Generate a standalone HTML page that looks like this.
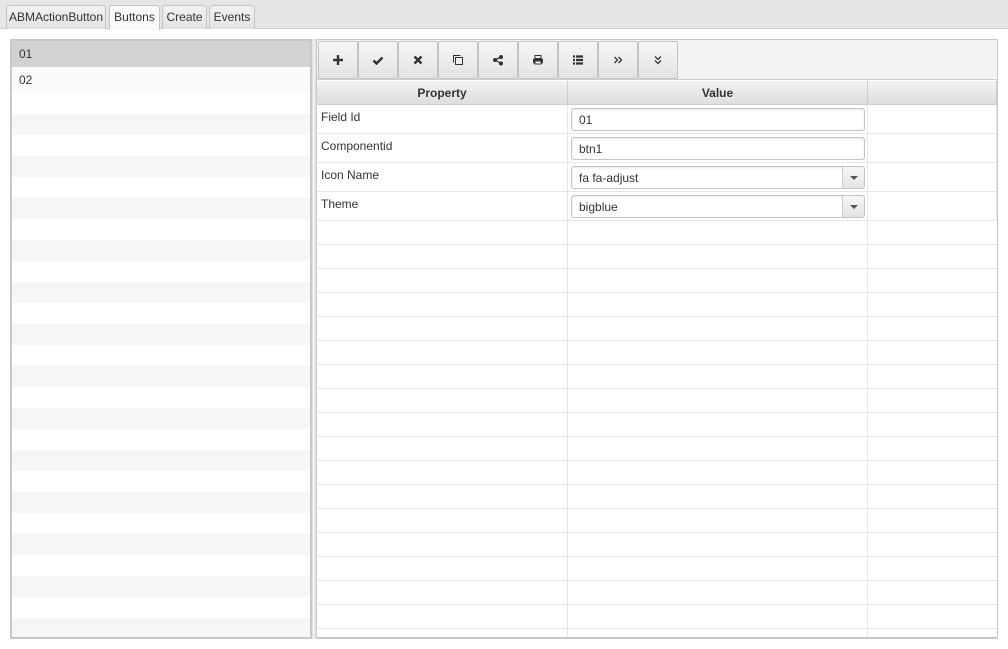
<!DOCTYPE html>
<html><head><style>
*{box-sizing:border-box;margin:0;padding:0}
body{width:1008px;height:649px;background:#fff;font-family:"Liberation Sans","DejaVu Sans",sans-serif;font-size:12px;color:#333;position:relative;overflow:hidden}
.tabbar{position:absolute;left:0;top:0;width:1008px;height:29px;background:#e6e6e6;border-bottom:1px solid #ccc}
.tab{position:absolute;top:5px;height:24px;border:1px solid #c4c4c4;border-bottom:none;border-radius:3px 3px 0 0;background:linear-gradient(#f2f2f2,#e2e2e2);line-height:22px;text-align:center;font-size:12px;color:#333}
.tab.act{background:#fafafa;height:25px}
.left{position:absolute;left:10px;top:39px;width:302px;height:600px;border:2px solid #c8c8c8;
background:repeating-linear-gradient(#fff 0 21px,#f6f6f6 21px 42px);background-position:0 52px}
.row{position:absolute;left:0;width:298px;height:26px;line-height:26px;padding-left:7px}
.split{position:absolute;left:312px;top:39px;width:4px;height:600px;background:linear-gradient(90deg,#ddd,#f3f3f3,#ddd)}
.right{position:absolute;left:316px;top:39px;width:682px;height:600px;border:1px solid #c8c8c8;border-bottom:2px solid #c8c8c8;background:#fff;overflow:hidden}
.tb{position:absolute;left:0;top:0;width:680px;height:40px;background:#f2f2f2;border-bottom:1px solid #ccc}
.btn{position:absolute;top:1px;width:40px;height:38px;border:1px solid #c4c4c4;border-radius:2px;background:linear-gradient(#f6f6f6,#e3e3e3);display:flex;align-items:center;justify-content:center}
.hdr{position:absolute;top:41px;height:24px;background:linear-gradient(#f2f2f2,#dedede);border-right:1px solid #ccc;border-bottom:1px solid #ccc;font-weight:bold;text-align:center;line-height:24px;color:#333}
.cell{position:absolute;border-bottom:1px solid #e6e6e6;border-right:1px solid #e6e6e6}
.lbl{padding:5px 0 0 4px}
.inp{position:absolute;left:254px;width:294px;height:23px;border:1px solid #c4c4c4;border-radius:3px;background:#fff;padding-left:7px;line-height:22px;box-shadow:inset 0 1px 2px #e6e6e6}
.dd{position:absolute;right:0;top:0;width:22px;height:21px;border-left:1px solid #ccc;background:linear-gradient(#f6f6f6,#e4e4e4);border-radius:0 3px 3px 0}
.dd:after{content:"";position:absolute;left:7px;top:9px;border:4px solid transparent;border-top:4px solid #555;border-bottom:none}
</style></head><body>
<div class="tabbar">
<div class="tab" style="left:6px;width:100px">ABMActionButton</div>
<div class="tab act" style="left:109px;width:51px">Buttons</div>
<div class="tab" style="left:162px;width:45px">Create</div>
<div class="tab" style="left:209px;width:46px">Events</div>
</div>
<div class="left">
<div class="row" style="top:0;background:#d2d2d2">01</div>
<div class="row" style="top:26px;background:#fafafa">02</div>
</div>
<div class="split"></div>
<div class="right">
<div class="tb">
<div class="btn" style="left:1px"><svg width="12" height="12"><path d="M6 1v10M1 6h10" stroke="#333" stroke-width="2.4"/></svg></div>
<div class="btn" style="left:41px"><svg width="12" height="12"><path d="M1.5 6.5l3 3 6-6" stroke="#333" stroke-width="2.4" fill="none"/></svg></div>
<div class="btn" style="left:81px"><svg width="12" height="12"><path d="M2.5 2.5l7 7M9.5 2.5l-7 7" stroke="#333" stroke-width="2.4"/></svg></div>
<div class="btn" style="left:121px"><svg width="12" height="12"><rect x="3.5" y="3.5" width="7" height="7" fill="none" stroke="#333"/><path d="M1.5 8.5v-7h7" fill="none" stroke="#333"/></svg></div>
<div class="btn" style="left:161px"><svg width="12" height="12"><circle cx="3" cy="6" r="2" fill="#333"/><circle cx="9" cy="3" r="2" fill="#333"/><circle cx="9" cy="9.5" r="2" fill="#333"/><path d="M3 6L9 3M3 6l6 3.5" stroke="#333" stroke-width="1.3"/></svg></div>
<div class="btn" style="left:201px"><svg width="12" height="12"><rect x="3" y="1.5" width="6" height="3" fill="none" stroke="#333"/><rect x="1" y="4.5" width="10" height="5" rx="1" fill="#333"/><rect x="3" y="7" width="6" height="3" fill="#fff" stroke="#333"/></svg></div>
<div class="btn" style="left:241px"><svg width="12" height="12"><path d="M1 2.5h2M4 2.5h7M1 6h2M4 6h7M1 9.5h2M4 9.5h7" stroke="#333" stroke-width="2.2"/></svg></div>
<div class="btn" style="left:281px"><svg width="12" height="12"><path d="M2.5 3l3 3-3 3M6.5 3l3 3-3 3" stroke="#333" stroke-width="1.3" fill="none"/></svg></div>
<div class="btn" style="left:321px"><svg width="12" height="12"><path d="M3 2.5l3 3 3-3M3 6.5l3 3 3-3" stroke="#333" stroke-width="1.3" fill="none"/></svg></div>
</div>
<div class="hdr" style="left:0;width:251px">Property</div>
<div class="hdr" style="left:251px;width:300px">Value</div>
<div class="hdr" style="left:551px;width:129px"></div>

<div class="cell lbl" style="left:0;top:65px;width:251px;height:29px">Field Id</div>
<div class="cell" style="left:251px;top:65px;width:300px;height:29px"></div>
<div class="cell" style="left:551px;top:65px;width:129px;height:29px"></div>
<div class="cell lbl" style="left:0;top:94px;width:251px;height:29px">Componentid</div>
<div class="cell" style="left:251px;top:94px;width:300px;height:29px"></div>
<div class="cell" style="left:551px;top:94px;width:129px;height:29px"></div>
<div class="cell lbl" style="left:0;top:123px;width:251px;height:29px">Icon Name</div>
<div class="cell" style="left:251px;top:123px;width:300px;height:29px"></div>
<div class="cell" style="left:551px;top:123px;width:129px;height:29px"></div>
<div class="cell lbl" style="left:0;top:152px;width:251px;height:29px">Theme</div>
<div class="cell" style="left:251px;top:152px;width:300px;height:29px"></div>
<div class="cell" style="left:551px;top:152px;width:129px;height:29px"></div>

<div class="inp" style="top:68px">01</div>
<div class="inp" style="top:97px">btn1</div>
<div class="inp" style="top:126px">fa fa-adjust<div class="dd"></div></div>
<div class="inp" style="top:155px">bigblue<div class="dd"></div></div>

<div style="position:absolute;left:0;top:181px;width:680px;height:420px;background:repeating-linear-gradient(#fff 0 23px,#e6e6e6 23px 24px)"></div>
<div style="position:absolute;left:250px;top:181px;width:1px;height:420px;background:#e6e6e6"></div>
<div style="position:absolute;left:550px;top:181px;width:1px;height:420px;background:#e6e6e6"></div>
</div>
</body></html>
